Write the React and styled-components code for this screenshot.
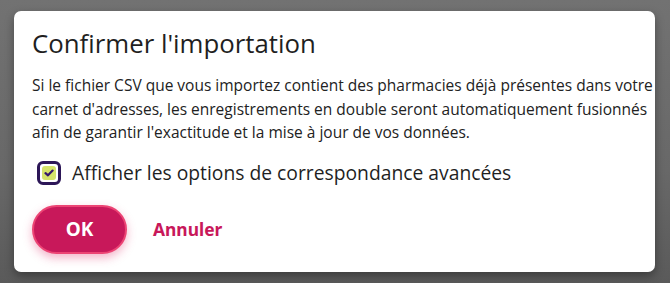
import React, { useState } from "react";
import styled, { createGlobalStyle } from "styled-components";

const Global = createGlobalStyle`
  html, body { margin: 0; padding: 0; }
  body {
    width: 670px;
    height: 283px;
    overflow: hidden;
    background: linear-gradient(180deg, #727272 0%, #686868 60%, #5a5a5a 100%);
    font-family: "Open Sans", "Noto Sans", sans-serif;
  }
`;

const Backdrop = styled.div`
  width: 670px;
  height: 283px;
  box-sizing: border-box;
  padding: 11px 15px 0 14px;
`;

const Dialog = styled.div`
  height: 261px;
  box-sizing: border-box;
  background: #ffffff;
  border-radius: 7px;
  box-shadow: 0 4px 10px rgba(0, 0, 0, 0.35);
  padding: 17px 2px 0 18px;
  display: flex;
  flex-direction: column;
`;

const Title = styled.h2`
  margin: 0;
  font-size: 25.8px;
  line-height: 30px;
  font-weight: 400;
  color: #1f1f1f;
`;

const Body = styled.p`
  margin: 16px 0 0 0;
  font-size: 15.5px;
  line-height: 23.5px;
  color: #222222;
  white-space: nowrap;
`;

const CheckRow = styled.label`
  margin-top: 14px;
  display: flex;
  align-items: center;
  gap: 11px;
  padding-left: 5px;
  cursor: pointer;
`;

const Box = styled.span`
  width: 24px;
  height: 24px;
  box-sizing: border-box;
  border: 3px solid #2c1657;
  border-radius: 6px;
  padding: 2px;
  display: flex;
  flex-shrink: 0;
`;

const Fill = styled.span`
  flex: 1;
  border-radius: 3px;
  background: ${(p) => (p.$on ? "#d5e36a" : "transparent")};
  display: flex;
  align-items: center;
  justify-content: center;
`;

const Label = styled.span`
  font-size: 19.3px;
  line-height: 28px;
  color: #1f1f1f;
`;

const Actions = styled.div`
  margin-top: 18px;
  display: flex;
  align-items: center;
  gap: 26px;
`;

const OkButton = styled.button`
  width: 95px;
  height: 49px;
  box-sizing: border-box;
  border: 2px solid #ec4474;
  border-radius: 25px;
  background: #c8185a;
  color: #ffffff;
  font-family: "Noto Sans", sans-serif;
  font-weight: 700;
  font-size: 19px;
  box-shadow: 0 4px 10px rgba(220, 40, 100, 0.35);
  cursor: pointer;
`;

const CancelButton = styled.button`
  border: none;
  background: none;
  padding: 0;
  color: #c8185a;
  font-family: "Noto Sans", sans-serif;
  font-weight: 700;
  font-size: 17.4px;
  cursor: pointer;
`;

export default function App() {
  const [on, setOn] = useState(true);
  return (
    <>
      <Global />
      <Backdrop>
        <Dialog>
          <Title>Confirmer l'importation</Title>
          <Body>
            Si le fichier CSV que vous importez contient des pharmacies déjà présentes dans votre
            <br />
            carnet d'adresses, les enregistrements en double seront automatiquement fusionnés
            <br />
            afin de garantir l'exactitude et la mise à jour de vos données.
          </Body>
          <CheckRow onClick={() => setOn(!on)}>
            <Box>
              <Fill $on={on}>
                {on && (
                  <svg width="10" height="8" viewBox="0 0 10 8">
                    <path d="M1.5 4.2 L4 6.3 L8.6 1.6" fill="none" stroke="#35176a" strokeWidth="2.2" strokeLinecap="round" strokeLinejoin="round" />
                  </svg>
                )}
              </Fill>
            </Box>
            <Label>Afficher les options de correspondance avancées</Label>
          </CheckRow>
          <Actions>
            <OkButton>OK</OkButton>
            <CancelButton>Annuler</CancelButton>
          </Actions>
        </Dialog>
      </Backdrop>
    </>
  );
}
